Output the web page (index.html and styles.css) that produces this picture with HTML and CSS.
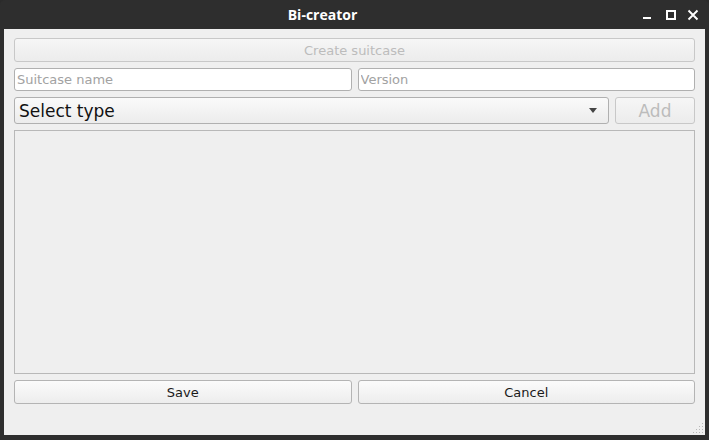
FILE: index.html
```html
<!DOCTYPE html>
<html>
<head>
<meta charset="utf-8">
<link rel="stylesheet" href="styles.css">
</head>
<body>
<div class="window">
  <div class="titlebar">
    <div class="title">Bi-creator</div>
    <div class="controls">
      <svg class="ctl ctl-min" width="12" height="12" viewBox="0 0 12 12"><rect x="2" y="8" width="8" height="2" fill="#fff"/></svg>
      <svg class="ctl ctl-max" width="12" height="12" viewBox="0 0 12 12"><rect x="2" y="2" width="8" height="8" fill="none" stroke="#fff" stroke-width="2"/></svg>
      <svg class="ctl ctl-close" width="12" height="12" viewBox="0 0 12 12"><path d="M1.5 1.5 L10.5 10.5 M10.5 1.5 L1.5 10.5" stroke="#fff" stroke-width="1.9"/></svg>
    </div>
  </div>
  <div class="content">
    <button class="btn btn-wide disabled">Create suitcase</button>
    <div class="row">
      <input class="field" placeholder="Suitcase name">
      <input class="field" placeholder="Version">
    </div>
    <div class="row row-select">
      <div class="select">
        <span class="select-text">Select type</span>
        <svg width="8" height="5" viewBox="0 0 8 5"><path d="M0 0 H8 L4 5 Z" fill="#444"/></svg>
      </div>
      <button class="btn btn-add disabled">Add</button>
    </div>
    <div class="list"></div>
    <div class="row">
      <button class="btn btn-half">Save</button>
      <button class="btn btn-half">Cancel</button>
    </div>
    <div class="footer">
      <svg class="grip" width="12" height="12" viewBox="0 0 12 12">
        <g fill="#b8b8b8">
          <rect x="10" y="1" width="1" height="1"/>
          <rect x="7" y="4" width="1" height="1"/><rect x="10" y="4" width="1" height="1"/>
          <rect x="4" y="7" width="1" height="1"/><rect x="7" y="7" width="1" height="1"/><rect x="10" y="7" width="1" height="1"/>
          <rect x="1" y="10" width="1" height="1"/><rect x="4" y="10" width="1" height="1"/><rect x="7" y="10" width="1" height="1"/><rect x="10" y="10" width="1" height="1"/>
        </g>
      </svg>
    </div>
  </div>
</div>
</body>
</html>
```
FILE: styles.css
```css
* { box-sizing: border-box; }
html, body { margin: 0; padding: 0; background: #2b2b2b; }
body { width: 709px; height: 440px; overflow: hidden; font-family: "DejaVu Sans", sans-serif; }
.window {
  width: 709px; height: 440px;
  background: #2e2e2e;
  border-radius: 5px 5px 0 0;
  display: flex; flex-direction: column;
  padding: 0 4px 5px 4px;
}
.titlebar {
  height: 29px;
  display: flex; align-items: center;
}
.title {
  flex: 1;
  text-align: center;
  color: #fff;
  font-family: "Open Sans", "DejaVu Sans", sans-serif;
  font-weight: 700;
  font-size: 14px;
  margin-top: -1px;
}
.controls {
  display: flex; align-items: center;
  padding-right: 6px;
  margin-top: 1px;
}
.ctl { display: block; }
.ctl-max { margin-left: 12px; }
.ctl-close { margin-left: 10px; }
.content {
  flex: 1;
  background: #efefef;
  padding: 9px 10px 0 10px;
  display: flex; flex-direction: column; gap: 6px;
}
.btn {
  font-family: "DejaVu Sans", sans-serif;
  font-size: 13px;
  color: #1a1a1a;
  background: linear-gradient(#fbfbfb, #ededed);
  border: 1px solid #b4b4b4;
  border-radius: 3px;
  padding: 0;
  margin: 0;
}
.btn.disabled { color: #bcbcbc; border-color: #c8c8c8; background: linear-gradient(#f6f6f6, #ececec); }
.btn-wide { height: 24px; width: 100%; }
.row { display: flex; gap: 6px; }
.field {
  flex: 1; min-width: 0;
  height: 23px;
  border: 1px solid #b0b0b0;
  border-radius: 3px;
  background: #fff;
  font-family: "DejaVu Sans", sans-serif;
  font-size: 13px;
  padding: 0 2px;
  margin: 0;
}
.field::placeholder { color: #a2a2a2; }
.row-select { height: 27px; }
.select {
  flex: 1;
  border: 1px solid #b0b0b0;
  border-radius: 3px;
  background: linear-gradient(#fafafa, #ececec);
  display: flex; align-items: center; justify-content: space-between;
  padding: 0 11px 0 4px;
}
.select-text { font-size: 17px; color: #111; }
.btn-add { width: 80px; font-size: 17px; height: 27px; }
.list {
  height: 244px;
  border: 1px solid #b8b8b8;
  background: #efefef;
}
.btn-half { flex: 1; height: 24px; }
.footer { flex: 1; display: flex; justify-content: flex-end; align-items: flex-end; margin-right: -9px; }
.grip { display: block; margin-bottom: 1px; }
```
